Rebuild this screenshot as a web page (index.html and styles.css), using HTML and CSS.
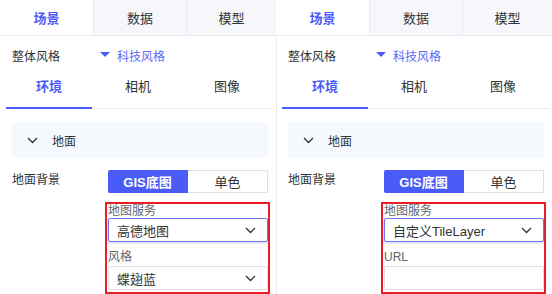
FILE: index.html
```html
<!DOCTYPE html>
<html lang="zh-CN">
<head>
<meta charset="utf-8">
<title>场景设置</title>
<link rel="stylesheet" href="styles.css">
</head>
<body>
<div class="page">
  <section class="panel">
    <div class="tabs">
      <div class="tab active">场景</div>
      <div class="tab">数据</div>
      <div class="tab">模型</div>
    </div>
    <div class="body">
      <div class="style-row">
        <span class="label">整体风格</span>
        <span class="tri"></span>
        <span class="style-value">科技风格</span>
      </div>
      <div class="subtabs">
        <div class="subtab active">环境</div>
        <div class="subtab">相机</div>
        <div class="subtab">图像</div>
      </div>
      <div class="collapse">
        <svg class="chev" width="11" height="7" viewBox="0 0 11 7"><path d="M1 1l4.5 4.5L10 1" fill="none" stroke="#333" stroke-width="1.3"/></svg>
        <span>地面</span>
      </div>
      <div class="field-row">
        <span class="label">地面背景</span>
        <div class="seg">
          <div class="seg-btn on">GIS底图</div>
          <div class="seg-btn">单色</div>
        </div>
      </div>
      <div class="highlight">
        <div class="f-label">地图服务</div>
        <div class="select focus"><span>高德地图</span><svg width="11" height="7" viewBox="0 0 11 7"><path d="M1 1l4.5 4.5L10 1" fill="none" stroke="#333" stroke-width="1.3"/></svg></div>
        <div class="f-label second">风格</div>
        <div class="select"><span>蝶翅蓝</span><svg width="11" height="7" viewBox="0 0 11 7"><path d="M1 1l4.5 4.5L10 1" fill="none" stroke="#333" stroke-width="1.3"/></svg></div>
      </div>
    </div>
  </section>
  <section class="panel">
    <div class="tabs">
      <div class="tab active">场景</div>
      <div class="tab">数据</div>
      <div class="tab">模型</div>
    </div>
    <div class="body divided">
      <div class="style-row">
        <span class="label">整体风格</span>
        <span class="tri"></span>
        <span class="style-value">科技风格</span>
      </div>
      <div class="subtabs">
        <div class="subtab active">环境</div>
        <div class="subtab">相机</div>
        <div class="subtab">图像</div>
      </div>
      <div class="collapse">
        <svg class="chev" width="11" height="7" viewBox="0 0 11 7"><path d="M1 1l4.5 4.5L10 1" fill="none" stroke="#333" stroke-width="1.3"/></svg>
        <span>地面</span>
      </div>
      <div class="field-row">
        <span class="label">地面背景</span>
        <div class="seg">
          <div class="seg-btn on">GIS底图</div>
          <div class="seg-btn">单色</div>
        </div>
      </div>
      <div class="highlight">
        <div class="f-label">地图服务</div>
        <div class="select focus"><span>自定义TileLayer</span><svg width="11" height="7" viewBox="0 0 11 7"><path d="M1 1l4.5 4.5L10 1" fill="none" stroke="#333" stroke-width="1.3"/></svg></div>
        <div class="f-label second">URL</div>
        <div class="select input"></div>
      </div>
    </div>
  </section>
</div>
</body>
</html>
```

FILE: styles.css
```css
* { box-sizing: border-box; }
html, body { margin: 0; padding: 0; background: #fff; }
body {
  font-family: "Liberation Sans", "Noto Sans CJK SC", sans-serif;
  font-size: 12px;
  color: #333;
}
.page { display: flex; width: 552px; height: 294px; overflow: hidden; }
.panel { width: 276px; flex: none; display: flex; flex-direction: column; }

.tabs {
  display: grid;
  grid-template-columns: 93px 93px 90px;
  height: 36px;
  border-bottom: 1px solid #e8ecf2;
}
.tab {
  background: #f5f7fb;
  border-left: 1px solid #e8ecf2;
  display: flex; align-items: center; justify-content: center;
  font-size: 13px; color: #333;
  padding-bottom: 1px;
}
.tab:first-child { border-left: none; }
.tab.active { background: #fff; color: #4a5cf7; font-weight: 600; }

.body { flex: 1; }
.body.divided { box-shadow: inset 1px 0 0 #e8ecf2; }

.style-row {
  height: 38px;
  display: flex; align-items: center;
  padding-left: 12px;
}
.style-row .label { width: 88px; color: #333; }
.tri {
  width: 0; height: 0;
  border-left: 5px solid transparent;
  border-right: 5px solid transparent;
  border-top: 5px solid #4a5cf7;
  margin-top: -1px;
}
.style-value { color: #5b6af6; margin-left: 7px; font-size: 12px; }

.subtabs {
  display: grid;
  grid-template-columns: 86px 86px 86px;
  column-gap: 3px;
  margin: 0 2px 0 6px;
  height: 35px;
  border-bottom: 1px solid #e8ecf2;
}
.subtab {
  position: relative;
  text-align: center;
  font-size: 13px;
  line-height: 18px;
  padding-top: 4px;
  color: #333;
}
.subtab.active { color: #4a5cf7; font-weight: 600; }
.subtab.active::after {
  content: "";
  position: absolute;
  left: 0; right: 0; bottom: -1px;
  height: 2px;
  background: #4a5cf7;
}

.collapse {
  margin: 13px 8px 0 12px;
  height: 36px;
  background: #f5f8fc;
  display: flex; align-items: center;
  padding-left: 15px;
  font-size: 12px;
}
.collapse .chev { margin-right: 14px; }

.field-row {
  display: flex;
  margin-top: 12px;
  padding-left: 12px;
}
.field-row .label { width: 96px; line-height: 20px; }
.seg { display: flex; width: 160px; height: 23px; }
.seg-btn {
  flex: 1;
  display: flex; align-items: center; justify-content: center;
  border: 1px solid #dcdfe6;
  border-left: none;
  border-radius: 0 2px 2px 0;
  font-size: 13px; color: #333;
}
.seg-btn.on {
  background: #4a5cf7;
  border-color: #4a5cf7;
  border-radius: 2px 0 0 2px;
  color: #fff;
  font-weight: 600;
}

.highlight {
  margin: 9px 0 0 105px;
  width: 165px;
  border: 2px solid #ec1c24;
  padding: 0 0 2px 1px;
}
.f-label { font-size: 12px; line-height: 14px; color: #666; }
.f-label.second { margin-top: 8px; margin-bottom: 2px; }
.select {
  height: 24px;
  border: 1px solid #dcdfe6;
  border-radius: 2px;
  display: flex; align-items: center; justify-content: space-between;
  padding: 0 11px 0 8px;
  font-size: 13px; color: #333;
  background: #fff;
}
.select.focus {
  border-color: #6a76f5;
  box-shadow: 0 1px 0 1px rgba(74, 92, 247, 0.15);
}
```
